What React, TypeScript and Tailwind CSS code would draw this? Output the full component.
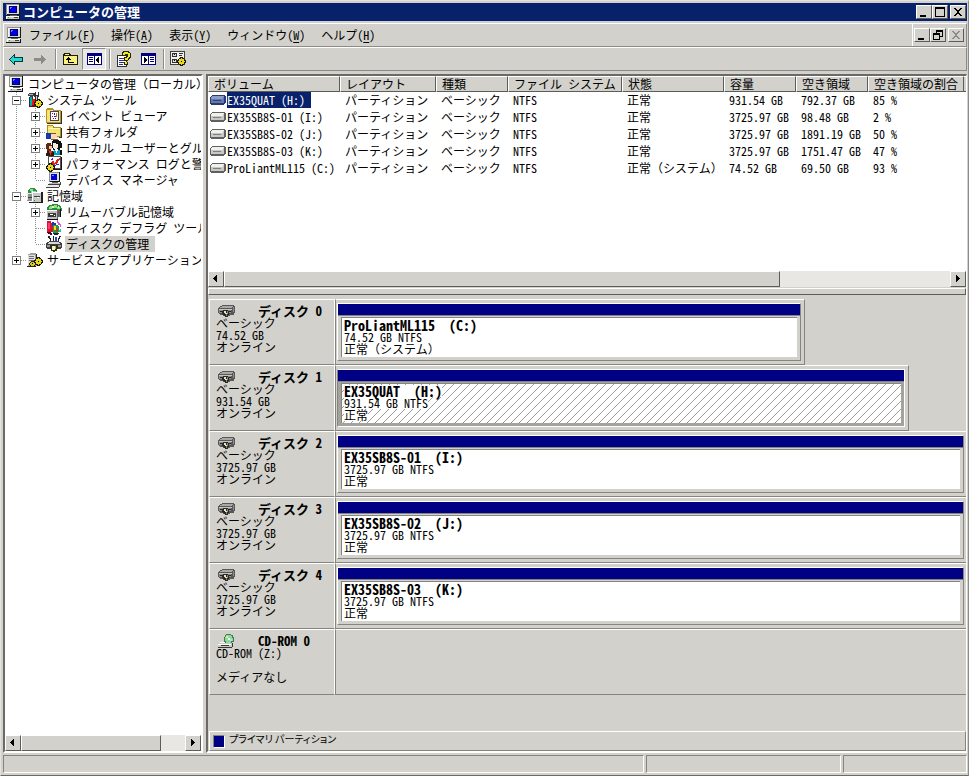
import React, { useState } from "react";

const raised = "border border-t-white border-l-white border-r-[#5c5c58] border-b-[#5c5c58] bg-[#d2d1cb]";

function Glyph({ w = 16, h = 16, className = "", children }: { w?: number; h?: number; className?: string; children: React.ReactNode }) {
  return (
    <svg width={w} height={h} viewBox={`0 0 ${w} ${h}`} shapeRendering="crispEdges" className={`shrink-0 ${className}`} aria-hidden="true">
      {children}
    </svg>
  );
}

/* Half-width Latin everywhere, but full-width brackets keep their full em. */
function Label({ text }: { text: string }) {
  return (
    <>
      {text.split(/([（）])/).map((part, i) =>
        part === "（" || part === "）" ? (
          <span key={i} className="[font-feature-settings:'fwid']">{part}</span>
        ) : (
          part
        ),
      )}
    </>
  );
}

function ComputerIcon() {
  return (
    <Glyph>
      <path d="M2 0h12v1H2z" fill="#909090" />
      <path d="M1 0h1v11H1z" fill="#909090" />
      <path d="M2 1h12v10H2z" fill="#d8d8d8" />
      <path d="M2 1h12v1H2zM2 1h1v10H2z" fill="#f4f4f4" />
      <path d="M14 0h1v11h-1zM2 10h13v1H2z" fill="#181818" />
      <path d="M4 2h8v7H4z" fill="#000070" />
      <path d="M5 3h6v5H5z" fill="#0000e8" />
      <path d="M5 3h2v1H5zM5 4h1v1H5z" fill="#7080ff" />
      <path d="M5 11h7v1H5z" fill="#606060" />
      <path d="M1 12h13v3H1z" fill="#c8c8c8" />
      <path d="M1 12h13v1H1zM1 12h1v3H1z" fill="#fff" />
      <path d="M0 15h15v1H0zM14 12h1v4h-1z" fill="#101010" />
      <path d="M9 13h4v1H9z" fill="#404040" />
      <path d="M3 13h1v1H3z" fill="#00c000" />
    </Glyph>
  );
}

function Gear({ x, y }: { x: number; y: number }) {
  return (
    <g transform={`translate(${x} ${y})`}>
      <path d="M3 0h3v1h1v1h1v1h1v3H8v1H7v1H6v1H3V8H2V7H1V6H0V3h1V2h1V1h1z" fill="#181800" />
      <path d="M4 1h1v1h2v2h1v1H7v2H5v1H4V7H2V5H1V4h1V2h2z" fill="#e8d820" />
      <path d="M4 4h1v1H4z" fill="#000" />
    </g>
  );
}

function ToolsIcon() {
  return (
    <Glyph>
      <path d="M1 2h1V1h5v1h1v2H6v1H3V4H1z" fill="#404040" />
      <path d="M2 2h4v1H2z" fill="#b0b0b0" />
      <path d="M3 5h2v8H3z" fill="#00b0b0" />
      <path d="M5 5h1v8H5zM2 5h1v8H2z" fill="#103838" />
      <path d="M8 0h1v3h2V0h1v5h-1v3H8V5H7V1h1z" fill="#303030" />
      <path d="M9 4h1v4H9z" fill="#d0d0d0" />
      <path d="M5 7h3v7H5z" fill="#e01818" />
      <path d="M8 7h1v7H8z" fill="#780000" />
      <path d="M2 13h7v2H2z" fill="#900000" />
      <path d="M3 13h2v1H3z" fill="#00a0a0" />
      <Gear x={7} y={7} />
    </Glyph>
  );
}

function EventIcon() {
  return (
    <Glyph>
      <path d="M0 1h1V0h6v1h1v1h7v13H0z" fill="#b89020" />
      <path d="M1 2h6v1h7v11H1z" fill="#f8e468" />
      <path d="M4 3h9v10H4z" fill="#404080" />
      <path d="M5 4h7v8H5z" fill="#fff" />
      <path d="M6 5h1v1H6zM6 8h1v1H6zM7 10h1v1H7z" fill="#e00000" />
      <path d="M8 5h1v2H8zM8 8h2v1H8zM9 10h1v1H9z" fill="#2020c0" />
      <path d="M10 5h1v4h-1z" fill="#e06000" />
      <path d="M15 3h1v13H1v-1h14z" fill="#303030" />
    </Glyph>
  );
}

function ShareIcon() {
  return (
    <Glyph>
      <path d="M1 1h6v1h1v1h7v10H1z" fill="#a89020" />
      <path d="M2 2h5v2h7v8H2z" fill="#f8e468" />
      <path d="M2 4h12v1H2z" fill="#fff8c8" />
      <path d="M15 4h1v10H8v-1h7z" fill="#303030" />
      <path d="M0 9h5v6H0z" fill="#1838b0" />
      <path d="M5 10h5v1h3v1h-2v1h2v1H9v1H5z" fill="#f8d8b8" />
      <path d="M5 15h7v1H5zM5 9h5v1H5z" fill="#805030" />
    </Glyph>
  );
}

function UsersIcon() {
  return (
    <Glyph>
      <path d="M6 1h1V0h6v1h2v2h1v5h-2v2H7V8H6z" fill="#101010" />
      <path d="M7 3h3v1h2v4h-1v1H8V8H7z" fill="#f8ece0" />
      <path d="M0 4h1V3h4v2h1v4H5v2H1V9H0z" fill="#5c2818" />
      <path d="M3 6h3v3H3z" fill="#f0c8a0" />
      <path d="M8 10h6v5H7v-4h1z" fill="#00a0c0" />
      <path d="M9 9h3v2h-1v2h-1v-2H9z" fill="#fff" />
      <path d="M1 11h6v1h1v4H0v-3h1z" fill="#301810" />
      <path d="M3 11h3v2H5v2H4v-2H3z" fill="#e03020" />
      <path d="M14 10h2v5h-2z" fill="#101010" />
    </Glyph>
  );
}

function PerfIcon() {
  return (
    <Glyph>
      <path d="M2 0h13v13H2z" fill="#505050" />
      <path d="M3 1h11v11H3z" fill="#fff" />
      <path d="M4 8h1V6h1V5h2v2h1V6h1V4h1V3h2V2h1v2h-1v1h-1v2h-1v1H9v1H7V8H6v2H4z" fill="#e02020" />
      <path d="M5 3h1v1H5zM8 9h2v1H8zM10 8h3v1h-3zM6 2h1v2H6z" fill="#2030d0" />
      <path d="M15 1h1v13H6v-1h9z" fill="#181818" />
      <Gear x={0} y={7} />
    </Glyph>
  );
}

function DeviceIcon() {
  return (
    <Glyph>
      <path d="M3 0h10v10H3z" fill="#909090" />
      <path d="M4 1h9v8H4z" fill="#e0e0e0" />
      <path d="M5 2h6v6H5z" fill="#0000d0" />
      <path d="M6 3h2v1H6z" fill="#8090ff" />
      <path d="M13 0h1v10H4V9h9z" fill="#101010" />
      <path d="M6 10h6v1H6z" fill="#606060" />
      <path d="M3 11h11v2H3z" fill="#b8b8b8" />
      <path d="M1 13h12v2H1z" fill="#e8e8e8" />
      <path d="M2 12h11v1H2zM0 15h13v1H0zM14 10h1v3h-1v2h-1v-3h1z" fill="#404040" />
    </Glyph>
  );
}

function StorageIcon() {
  return (
    <Glyph>
      <path d="M1 2h1V1h1V0h5v1h1v1h1v4H1z" fill="#309048" />
      <path d="M3 1h3v2h3v2H4V3H3z" fill="#88e890" />
      <path d="M5 3h1v1H5z" fill="#fff" />
      <path d="M0 5h6v8H0z" fill="#909090" />
      <path d="M0 5h6v1H0zM0 6h1v6H0z" fill="#e8e8e8" />
      <path d="M5 4h9v10H5z" fill="#c8c8c8" />
      <path d="M5 4h9v1H5zM5 5h1v9H5z" fill="#fff" />
      <path d="M14 4h2v11H2v-1h12z" fill="#202020" />
      <path d="M7 8h6v1H7zM1 9h4v1H1z" fill="#404040" />
      <path d="M10 9h2v1h-2z" fill="#fff" />
      <path d="M7 12h1v1H7z" fill="#00a000" />
    </Glyph>
  );
}

function RemovableIcon() {
  return (
    <Glyph>
      <path d="M1 3h1V2h1V1h3V0h6v1h2v1h1v2h1v3H1z" fill="#308848" />
      <path d="M3 3h1V2h2v3H3zM8 1h3v2h3v2h-3V4H8z" fill="#88e080" />
      <path d="M6 2h2v2H6zM12 2h1v2h-1z" fill="#e8f890" />
      <path d="M0 6h11v9H0z" fill="#c0c0c0" />
      <path d="M0 6h11v1H0zM0 7h1v8H0z" fill="#fff" />
      <path d="M11 6h3v7h-2v2h-1z" fill="#606060" />
      <path d="M1 15h11v1H1zM14 5h1v8h-1z" fill="#101010" />
      <path d="M2 9h8v4H2z" fill="#383838" />
      <path d="M4 10h3v1H4zM8 11h1v1H8z" fill="#fff" />
    </Glyph>
  );
}

function DefragIcon() {
  return (
    <Glyph>
      <path d="M1 1h4v2h2v9H5v2H3v-2H1z" fill="#e01030" />
      <path d="M2 3h2v6H2z" fill="#f04080" />
      <path d="M1 12h4v1h1v2H4v-1H2v-1H1z" fill="#500020" />
      <path d="M6 2h2v1h2v3H6z" fill="#2030d0" />
      <path d="M11 0h1v2h1v1h1v1h1v3h-1V5h-2V3h-1z" fill="#e050e0" />
      <path d="M7 5h5v1h1v6h-1v2H8v-1H7z" fill="#20a030" />
      <path d="M8 6h2v4H8z" fill="#f0e020" />
      <path d="M10 8h2v4h-2z" fill="#a05020" />
      <path d="M7 13h6v1h-1v1H8v-1H7z" fill="#202060" />
      <path d="M14 9h1v3h-2v-2h1z" fill="#20c0c0" />
    </Glyph>
  );
}

function DiskMgmtIcon() {
  return (
    <Glyph>
      <path d="M2 0h2v2h1v3H4V3H3V2H2zM7 0h1v5H7zM13 0h2v1h-1v2h-1v2h-1V2h1z" fill="#202020" />
      <path d="M9 1h2v4H9z" fill="#2848c0" />
      <path d="M3 5h10v1h2v1h1v5h-1v1H1v-1H0V7h1V6h2z" fill="#404040" />
      <path d="M3 6h10v1h1v1H2V7h1z" fill="#d8d8d8" />
      <path d="M1 9h14v2H1z" fill="#989898" />
      <path d="M4 9h8v4h-1v2H9v1H7v-1H5v-2H4z" fill="#303010" />
      <path d="M6 10h3v4H6z" fill="#f0f0e0" />
      <path d="M9 10h1v3H9z" fill="#d0b020" />
    </Glyph>
  );
}

function ServicesIcon() {
  return (
    <Glyph>
      <path d="M1 2h2V1h6v1h1v12H1z" fill="#a0a0a0" />
      <path d="M1 3h7v10H1z" fill="#e0e0e0" />
      <path d="M2 4h5v1H2zM2 6h5v1H2zM2 8h5v1H2z" fill="#707070" />
      <path d="M0 14h9v1H0zM9 2h1v6H9z" fill="#202020" />
      <Gear x={7} y={5} />
      <path d="M4 9h3v1h1v1h1v2H8v1H7v1H4v-1H3v-1H2v-2h1v-1h1z" fill="#282800" />
      <path d="M4 10h3v1h1v2H7v1H4v-1H3v-2h1z" fill="#d8c828" />
      <path d="M5 11h1v1H5z" fill="#000" />
    </Glyph>
  );
}

function DriveIcon({ selected }: { selected?: boolean }) {
  return (
    <Glyph w={16} h={10}>
      <path d="M2 0h13v1h1v7h-1v1h-1v1H1V9H0V2h1V1h1z" fill={selected ? "#283c70" : "#606060"} />
      <path d="M2 1h12v1H2zM1 2h13v6H1z" fill={selected ? "#6478ac" : "#c8c8c4"} />
      <path d="M2 1h12v1H2zM1 2h12v2H1z" fill={selected ? "#8c9cc8" : "#f0f0ec"} />
      <path d="M3 5h8v1H3z" fill={selected ? "#304480" : "#808080"} />
    </Glyph>
  );
}

function HardDiskIcon() {
  return (
    <Glyph w={17} h={12}>
      <path d="M4 0h12v1h1v7h-1v2h-4v1H5v-1H2V9H1V8H0V3h1V2h1V1h2z" fill="#585858" />
      <path d="M4 1h11v1h-1v1H2V2h2z" fill="#a8a8a4" />
      <path d="M1 4h13v1H1z" fill="#c4c4c0" />
      <path d="M1 5h12v3H1zM15 2h1v5h-1z" fill="#8c8c88" />
      <path d="M2 6h3v1H2zM10 6h3v1h-3z" fill="#242424" />
      <path d="M5 5h5v1h1v4h-1v2H7v-1H6v-1H5V9H4V6h1z" fill="#282828" />
      <path d="M6 6h2v2h1v1H7V8H6z" fill="#e4e3dc" />
      <path d="M8 9h1v2H8zM9 6h1v3H9z" fill="#9c8c48" />
    </Glyph>
  );
}

function CdIcon() {
  return (
    <Glyph w={17} h={14}>
      <path d="M8 0h5v1h2v2h1v5h-2v2H7V8H6V3h1V1h1z" fill="#487858" />
      <path d="M8 1h5v1h1v2h1v3h-2v2H8V7H7V3h1z" fill="#88dc98" />
      <path d="M8 2h2v2H8z" fill="#f0f080" />
      <path d="M12 5h2v2h-2z" fill="#a0e8f0" />
      <path d="M10 4h2v2h-2z" fill="#fff" />
      <path d="M1 9h13v4H0v-2h1z" fill="#c8c8c4" />
      <path d="M2 8h5v1H2zM0 10h13v1H0z" fill="#fff" />
      <path d="M14 9h1v4h-1v1H0v-1h14zM3 11h8v1H3z" fill="#383838" />
    </Glyph>
  );
}

function Caption({ kind, disabled }: { kind: "min" | "max" | "restore" | "close"; disabled?: boolean }) {
  const names = { min: "最小化", max: "最大化", restore: "元に戻す", close: "閉じる" };
  const color = disabled ? "#8c8b87" : "#000";
  return (
    <button aria-label={names[kind]} disabled={disabled} className={`flex h-[14px] w-4 items-center justify-center ${raised}`}>
      <Glyph w={12} h={10}>
        {kind === "min" && <path d="M2 8h6v2H2z" fill={color} />}
        {kind === "max" && <path d="M1 0h10v10H1zM2 2v7h8V2z" fillRule="evenodd" fill={color} />}
        {kind === "restore" && (
          <path d="M4 0h7v7H8V6h2V2H5v1H4zM1 3h7v7H1zM2 5v4h5V5z" fillRule="evenodd" fill={color} />
        )}
        {kind === "close" && (
          <path d="M2 1h2v1h1v1h2V2h1V1h2v1H9v1H8v1H7v2h1v1h1v1h1v1H8V8H7V7H5v1H4v1H2V8h1V7h1V6h1V4H4V3H3V2H2z" fill={color} />
        )}
      </Glyph>
    </button>
  );
}

function Separator() {
  return <span className="mr-px ml-[3px] h-5 w-0.5 border-l border-[#8c8b87] bg-white" />;
}

function Tool({ label, pressed, children }: { label: string; pressed?: boolean; children: React.ReactNode }) {
  return (
    <button
      aria-label={label}
      className={
        pressed
          ? "flex h-[22px] w-6 items-center justify-center border border-t-[#8c8b87] border-l-[#8c8b87] border-r-white border-b-white bg-[#e9e8e4]"
          : "flex h-[22px] w-6 items-center justify-center"
      }
    >
      {children}
    </button>
  );
}

function ListGlyph({ left }: { left?: boolean }) {
  return (
    <Glyph w={15} h={14}>
      <path d="M0 1h15v12H0z" fill="#000080" />
      <path d="M1 4h6v8H1zM8 4h6v8H8z" fill="#fff" />
      {left ? (
        <>
          <path d="M2 5h4v1H2zM2 7h4v1H2zM2 9h4v1H2z" fill="#000080" />
          <path d="M12 5v6h-1v-1h-1V9H9V7h1V6h1V5z" fill="#000" />
        </>
      ) : (
        <>
          <path d="M9 5h4v1H9zM9 7h4v1H9zM9 9h4v1H9z" fill="#000080" />
          <path d="M3 5v6h1v-1h1V9h1V7H5V6H4V5z" fill="#000" />
        </>
      )}
    </Glyph>
  );
}

function ScrollArrow({ dir }: { dir: "left" | "right" }) {
  return (
    <button aria-label={dir === "left" ? "左へスクロール" : "右へスクロール"} className={`flex size-4 shrink-0 items-center justify-center ${raised}`}>
      <Glyph w={8} h={8}>
        <path d={dir === "left" ? "M5 0v7H4V6H3V5H2V4H1V3h1V2h1V1h1V0z" : "M2 0v7h1V6h1V5h1V4h1V3H5V2H4V1H3V0z"} fill="#000" />
      </Glyph>
    </button>
  );
}

function ScrollBar({ thumb }: { thumb: string }) {
  return (
    <div className="flex h-4 w-full shrink-0 bg-[#e8e7e3]">
      <ScrollArrow dir="left" />
      <div className="min-w-0 flex-1">
        <div className={`h-4 ${raised} ${thumb}`} />
      </div>
      <ScrollArrow dir="right" />
    </div>
  );
}

/* Each character describes one 19px column before the icon:
   "|" line through, "+"/"-" expander, "t" branch, "l" last branch. */
type Node = { label: string; cols: string; icon: React.ReactNode; last?: boolean };

const tree: Node[] = [
  { label: "コンピュータの管理（ローカル）", cols: "", icon: <ComputerIcon /> },
  { label: "システム ツール", cols: "-", icon: <ToolsIcon /> },
  { label: "イベント ビューア", cols: "|+", icon: <EventIcon /> },
  { label: "共有フォルダ", cols: "|+", icon: <ShareIcon /> },
  { label: "ローカル ユーザーとグループ", cols: "|+", icon: <UsersIcon /> },
  { label: "パフォーマンス ログと警告", cols: "|+", icon: <PerfIcon /> },
  { label: "デバイス マネージャ", cols: "|l", icon: <DeviceIcon /> },
  { label: "記憶域", cols: "-", icon: <StorageIcon /> },
  { label: "リムーバブル記憶域", cols: "|+", icon: <RemovableIcon /> },
  { label: "ディスク デフラグ ツール", cols: "|t", icon: <DefragIcon /> },
  { label: "ディスクの管理", cols: "|l", icon: <DiskMgmtIcon /> },
  { label: "サービスとアプリケーション", cols: "+", icon: <ServicesIcon />, last: true },
];

function TreeColumn({ kind, last }: { kind: string; last?: boolean }) {
  const box = kind === "+" || kind === "-";
  const down = !(kind === "l" || last);
  const art = (
    <Glyph w={19} h={16}>
      <path d={down ? "M8.5 0V16" : "M8.5 0V8"} stroke="#909090" strokeDasharray="1 1" />
      {kind !== "|" && <path d="M9 8.5H18" stroke="#909090" strokeDasharray="1 1" />}
      {box && (
        <>
          <path d="M4.5 4.5h8v8h-8z" fill="#fff" stroke="#808080" />
          <path d="M6 8h5v1H6z" fill="#000" />
          {kind === "+" && <path d="M8 6h1v5H8z" fill="#000" />}
        </>
      )}
    </Glyph>
  );
  return box ? <button aria-label={kind === "+" ? "展開" : "折りたたむ"}>{art}</button> : art;
}

const columns = ["ボリューム", "レイアウト", "種類", "ファイル システム", "状態", "容量", "空き領域", "空き領域の割合"];
const volumes = [
  ["EX35QUAT (H:)", "正常", "931.54 GB", "792.37 GB", "85 %"],
  ["EX35SB8S-01 (I:)", "正常", "3725.97 GB", "98.48 GB", "2 %"],
  ["EX35SB8S-02 (J:)", "正常", "3725.97 GB", "1891.19 GB", "50 %"],
  ["EX35SB8S-03 (K:)", "正常", "3725.97 GB", "1751.47 GB", "47 %"],
  ["ProLiantML115 (C:)", "正常（システム）", "74.52 GB", "69.50 GB", "93 %"],
];

const disks = [
  { name: "ディスク 0", size: "74.52 GB", volume: "ProLiantML115\u00a0 (C:)", status: "正常（システム）", width: "w-[74.5%] border-r pr-[3px]" },
  { name: "ディスク 1", size: "931.54 GB", volume: "EX35QUAT\u00a0 (H:)", status: "正常", width: "w-[91%] border-r pr-[3px]", selected: true },
  { name: "ディスク 2", size: "3725.97 GB", volume: "EX35SB8S-01\u00a0 (I:)", status: "正常", width: "w-full pr-0.5" },
  { name: "ディスク 3", size: "3725.97 GB", volume: "EX35SB8S-02\u00a0 (J:)", status: "正常", width: "w-full pr-0.5" },
  { name: "ディスク 4", size: "3725.97 GB", volume: "EX35SB8S-03\u00a0 (K:)", status: "正常", width: "w-full pr-0.5" },
];

function DiskLabel({ icon, name, lines }: { icon: React.ReactNode; name: string; lines: string[] }) {
  return (
    <div className="h-[66px] w-[126px] shrink-0 border border-t-white border-l-white border-r-white border-b-[#85847f] px-1.5 pt-[5px]">
      <div className="flex h-3 items-center gap-[23px] pl-0.5">
        {icon}
        <h2 className="text-[13px] leading-3 font-bold">{name}</h2>
      </div>
      {lines.map((line, i) => (
        <p key={i} className="h-3">{line}</p>
      ))}
    </div>
  );
}

function Volume({ disk }: { disk: (typeof disks)[number] }) {
  const backing = disk.selected ? "bg-white" : "";
  return (
    <div className={`h-[66px] border-y border-l border-t-white border-r-[#85847f] border-b-[#85847f] border-l-[#85847f] py-[3px] pl-px ${disk.width}`}>
      <button
        className={`block w-full border text-left ${
          disk.selected
            ? "border-t-white border-l-[#85847f] border-r-white border-b-white bg-[#a3a29d]"
            : "border-t-white border-l-white border-r-[#85847f] border-b-[#85847f]"
        }`}
      >
        <div className="h-3 border-b border-[#85847f] bg-[#000084]" />
        <div className="px-[3px] pt-px pb-[3px]">
          <div className="relative h-10 overflow-hidden border-t border-l border-[#85847f] bg-white">
            {disk.selected && (
              <svg className="absolute inset-0 size-full" aria-hidden="true">
                <defs>
                  <pattern id="hatch" width="8" height="8" patternUnits="userSpaceOnUse">
                    <path d="M-1 9L9 -1M-1 1L1 -1M7 9L9 7" stroke="#858585" strokeWidth="0.8" />
                  </pattern>
                </defs>
                <rect width="100%" height="100%" fill="url(#hatch)" />
              </svg>
            )}
            <div className="relative flex flex-col items-start pt-px pl-0.5">
              <span className={`relative z-10 h-3 text-sm leading-3 font-bold ${backing}`}>{disk.volume}</span>
              <span className={`h-3 ${backing}`}>{disk.size} NTFS</span>
              <span className={`h-3 ${backing}`}><Label text={disk.status} /></span>
            </div>
          </div>
        </div>
      </button>
    </div>
  );
}

export default function App() {
  const [selectedNode, setSelectedNode] = useState(10);
  const menus = [["ファイル", "F"], ["操作", "A"], ["表示", "Y"], ["ウィンドウ", "W"], ["ヘルプ", "H"]];

  return (
    <div
      lang="ja"
      className="flex h-screen flex-col overflow-hidden border border-t-[#e4e3de] border-r-[#8c8b87] border-b-[#6b6a66] border-l-[#e4e3de] bg-[#d2d1cb] py-0.5 pr-px pl-0.5 font-['Noto_Sans_CJK_JP',sans-serif] text-xs leading-3 whitespace-nowrap text-black [font-feature-settings:'hwid']"
    >
      <header className="flex h-[18px] shrink-0 items-center bg-[#08216b] pr-px pl-0.5 text-white">
        <ComputerIcon />
        <h1 className="ml-0.5 flex-1 text-[13px] font-bold">コンピュータの管理</h1>
        <Caption kind="min" />
        <Caption kind="max" />
        <span className="w-0.5" />
        <Caption kind="close" />
      </header>

      <nav className="mt-0.5 flex h-6 shrink-0 items-center border border-t-white border-r-[#8c8b87] border-b-[#8c8b87] border-l-white pl-0.5">
        <ComputerIcon />
        <div className="ml-[7px] flex flex-1 gap-4">
          {menus.map(([name, key]) => (
            <button key={key}>
              {name}(<span className="underline underline-offset-2">{key}</span>)
            </button>
          ))}
        </div>
        <div className="flex h-full items-center border-l border-white pr-0.5 pl-px">
          <Caption kind="min" />
          <Caption kind="restore" />
          <span className="w-0.5" />
          <Caption kind="close" disabled />
        </div>
      </nav>

      <div className="flex h-6 shrink-0 items-center border border-t-white border-r-[#8c8b87] border-b-[#8c8b87] border-l-white" role="toolbar">
        <Tool label="戻る">
          <Glyph w={14} h={11}>
            <path d="M5 0h1v3h8v5H6v3H5v-1H4V9H3V8H2V7H1V6H0V5h1V4h1V3h1V2h1V1h1z" fill="#003838" />
            <path d="M5 2v2h8v3H5v2H4V8H3V7H2V6H1V5h1V4h1V3h1V2z" fill="#20d8d0" />
          </Glyph>
        </Tool>
        <Tool label="進む">
          <Glyph w={14} h={11}>
            <path d="M8 1h1v1h1v1h1v1h1v1h1v1h-1v1h-1v1h-1v1H9v1H8V7H1V4h7z" fill="#8c8b87" />
          </Glyph>
        </Tool>
        <Separator />
        <Tool label="1つ上のレベルへ">
          <Glyph w={15} h={14}>
            <path d="M1 1h6v1h1v1h7v10H0V2h1z" fill="#202000" />
            <path d="M2 2h4v1H2zM1 4h13v8H1z" fill="#f8f080" />
            <path d="M5 5h1v1h1v1h1v1H6v2h5v1H5V8H3V7h1V6h1z" fill="#000" />
          </Glyph>
        </Tool>
        <Tool label="ツリーの表示" pressed>
          <ListGlyph left />
        </Tool>
        <Separator />
        <Tool label="プロパティ">
          <Glyph>
            <path d="M1 4h9v11H1z" fill="#fff" stroke="#303030" />
            <path d="M3 7h5v1H3zM3 9h5v1H3zM3 11h5v1H3zM3 13h4v1H3z" fill="#303080" />
            <path d="M6 1h1V0h6v1h1v1h1v5h-1v1h-1v1h-1v1H8V6h2V5H6z" fill="#282800" />
            <path d="M8 1h4v1h2v4h-1v1h-1v2H9V7h2V6h1V3H9v1H7V2h1z" fill="#f0e830" />
            <path d="M8 11h4v3H8z" fill="#282800" />
            <path d="M9 11h2v2H9z" fill="#f0e830" />
          </Glyph>
        </Tool>
        <Tool label="操作ウィンドウ">
          <ListGlyph />
        </Tool>
        <Separator />
        <Tool label="設定">
          <Glyph>
            <path d="M0 0h15v14H0z" fill="#404040" />
            <path d="M1 1h13v12H1z" fill="#f0f0ec" />
            <path d="M2 2h5v4H2zM2 8h5v4H2zM9 2h4v1H9zM9 4h3v1H9z" fill="#303030" />
            <path d="M3 3h3v2H3zM3 9h3v2H3z" fill="#e0e0dc" />
            <path d="M4 3h1v1H4zM4 9h1v1H4z" fill="#000" />
            <Gear x={7} y={6} />
          </Glyph>
        </Tool>
      </div>

      <main className="mt-[3px] flex min-h-0 flex-1 gap-[3px]">
        <aside className="flex w-[200px] shrink-0 flex-col border-2 border-t-[#6b6a66] border-r-white border-b-white border-l-[#6b6a66] bg-white">
          <ul className="min-h-0 flex-1 overflow-hidden pl-[3px]">
            {tree.map((node, i) => (
              <li key={node.label} className="flex h-4 items-center">
                {node.cols.split("").map((kind, c) => (
                  <TreeColumn key={c} kind={kind} last={node.last} />
                ))}
                {node.icon}
                <button
                  onClick={() => setSelectedNode(i)}
                  className={`ml-[3px] h-4 shrink-0 px-px ${selectedNode === i ? "bg-[#d2d1cb] pr-1.5" : ""}`}
                >
                  <Label text={node.label} />
                </button>
              </li>
            ))}
          </ul>
          <ScrollBar thumb="w-[85.4%]" />
        </aside>

        <section className="flex min-w-0 flex-1 flex-col border-t-2 border-r border-b-2 border-l-2 border-t-[#6b6a66] border-r-white border-b-white border-l-[#6b6a66]">
          <div className="flex h-[211px] shrink-0 flex-col bg-white">
            <div className="min-h-0 flex-1 overflow-hidden">
              <table className="w-full table-fixed border-separate border-spacing-0 text-left">
                <colgroup>
                  <col className="w-[132px]" />
                  <col className="w-24" />
                  <col className="w-[72px]" />
                  <col className="w-[114px]" />
                  <col className="w-[102px]" />
                  <col className="w-[72px]" />
                  <col className="w-[72px]" />
                  <col className="w-24" />
                  <col />
                </colgroup>
                <thead>
                  <tr className="h-4">
                    {columns.map((c) => (
                      <th key={c} className={`h-4 p-0 pl-[5px] font-normal ${raised}`}>{c}</th>
                    ))}
                    <th className="border-t border-b border-t-white border-b-[#5c5c58] bg-[#d2d1cb] p-0" />
                  </tr>
                </thead>
                <tbody>
                  {volumes.map(([name, status, size, free, rate], i) => (
                    <tr key={name} className="h-[17px] align-top leading-4">
                      <td className="p-0 pl-0.5">
                        <div className="flex h-4 items-center gap-px">
                          <DriveIcon selected={i === 0} />
                          <span className={i === 0 ? "h-4 bg-[#08216b] pr-1.5 text-white" : ""}>{name}</span>
                        </div>
                      </td>
                      {["パーティション", "ベーシック", "NTFS", status, size, free, rate].map((v, c) => (
                        <td key={c} className="p-0 pl-[5px]"><Label text={v} /></td>
                      ))}
                      <td className="p-0" />
                    </tr>
                  ))}
                </tbody>
              </table>
            </div>
            <ScrollBar thumb="w-[76.6%]" />
          </div>

          <div className="h-px shrink-0 bg-[#d2d1cb]" />
          <div className="h-[7px] shrink-0 border border-t-white border-r-[#5c5c58] border-b-[#5c5c58] border-l-white" />

          <div className="flex min-h-0 flex-1 flex-col pt-1 pl-px">
            {disks.map((disk) => (
              <div key={disk.name} className="flex">
                <DiskLabel icon={<HardDiskIcon />} name={disk.name} lines={["ベーシック", disk.size, "オンライン"]} />
                <div className="min-w-0 flex-1">
                  <Volume disk={disk} />
                </div>
              </div>
            ))}
            <div className="flex">
              <DiskLabel icon={<CdIcon />} name="CD-ROM 0" lines={["CD-ROM (Z:)", "", "メディアなし"]} />
              <div className="min-w-0 flex-1 border-y border-l border-t-white border-b-[#85847f] border-l-[#85847f]" />
            </div>
            <div className="flex-1" />
            <footer className="flex h-5 shrink-0 items-center gap-1 border border-t-white border-r-[#85847f] border-b-[#85847f] border-l-white pl-[3px]">
              <span className="h-[13px] w-3 border border-t-[#85847f] border-r-white border-b-white border-l-[#85847f] bg-[#000084]" />
              <span className="pb-1 text-[10px] [font-feature-settings:'palt']">プライマリ パーティション</span>
            </footer>
          </div>
        </section>
      </main>

      <div className="mt-0.5 flex h-[18px] shrink-0 gap-0.5" role="status">
        <div className="flex-1 border border-t-[#85847f] border-r-white border-b-white border-l-[#85847f]" />
        <div className="w-[195px] border border-t-[#85847f] border-r-white border-b-white border-l-[#85847f]" />
        <div className="w-[124px] border border-t-[#85847f] border-r-white border-b-white border-l-[#85847f]" />
      </div>
    </div>
  );
}
